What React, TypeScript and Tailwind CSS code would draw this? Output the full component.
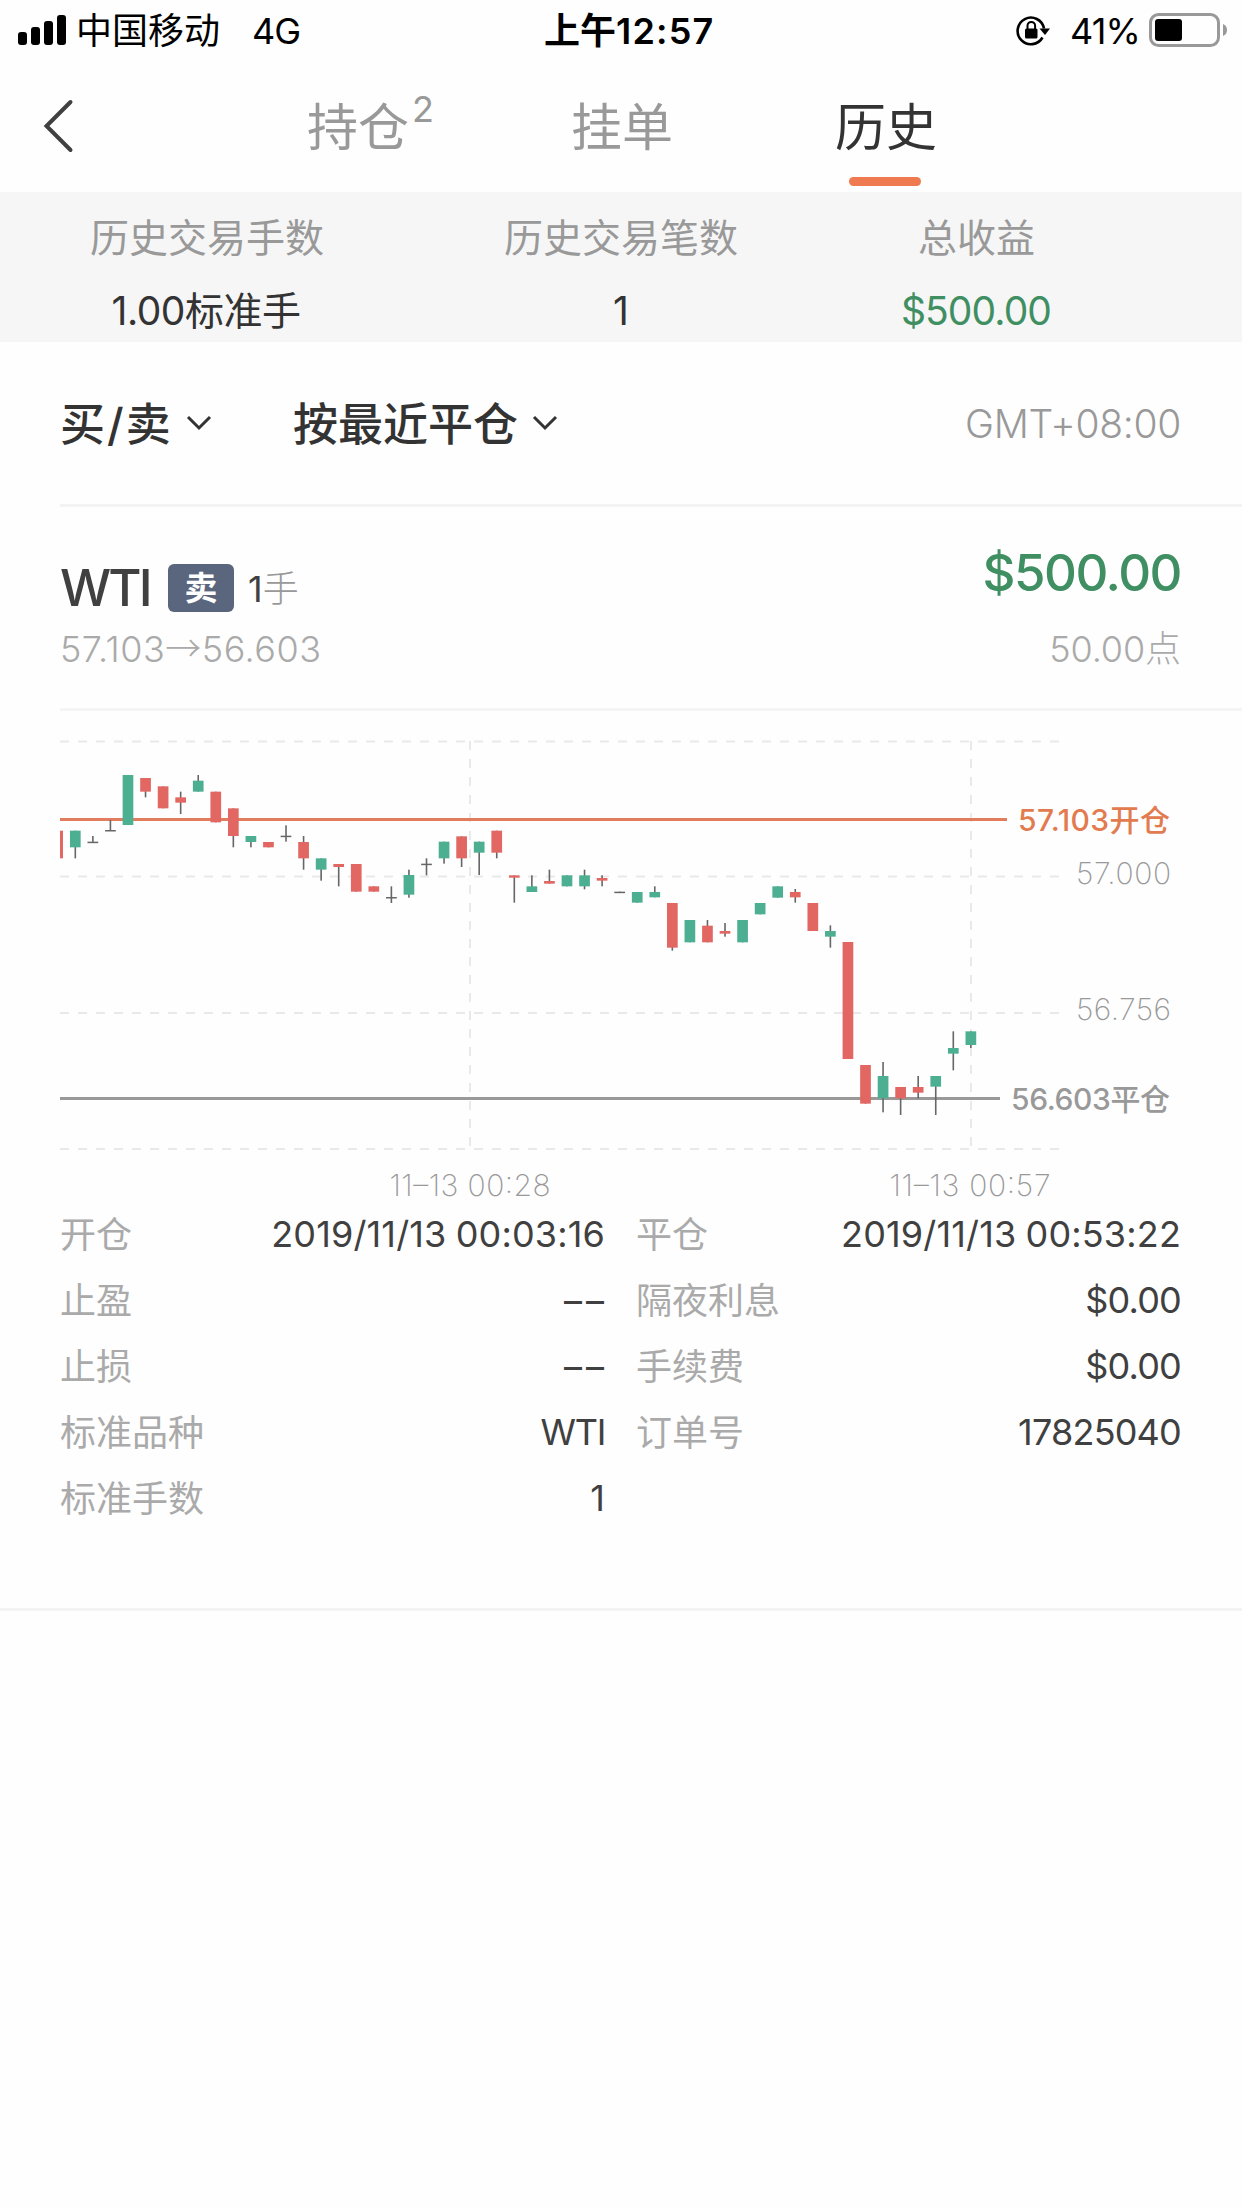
import React, { useState } from "react";
import clsx from "clsx";

// [direction, body top, body bottom, high, low], thirds of a pixel from the top of the plot
type RawCandle = ["g" | "r" | "d", number, number, number?, number?];

const RAW: RawCandle[] = [
  ["g", 332, 382, 332, 415],
  ["d", 365, 368, 348, 368],
  ["d", 330, 333, 300, 333],
  ["g", 165, 315],
  ["r", 174, 215, 174, 232],
  ["r", 199, 265],
  ["r", 232, 248, 215, 282],
  ["g", 182, 215, 165, 215],
  ["r", 215, 307],
  ["r", 265, 348, 265, 382],
  ["g", 348, 366, 348, 382],
  ["r", 366, 382],
  ["d", 347, 350, 316, 365],
  ["r", 366, 415, 348, 449],
  ["g", 415, 449, 415, 482],
  ["r", 432, 441, 432, 499],
  ["r", 432, 515],
  ["r", 499, 515],
  ["d", 531, 534, 499, 549],
  ["g", 465, 524, 449, 533],
  ["d", 431, 434, 415, 466],
  ["g", 365, 415, 365, 431],
  ["r", 349, 415, 349, 441],
  ["g", 365, 398, 365, 465],
  ["r", 332, 398, 332, 415],
  ["r", 466, 473, 466, 548],
  ["g", 499, 516, 466, 516],
  ["r", 483, 491, 449, 491],
  ["g", 466, 499],
  ["g", 466, 499, 449, 508],
  ["r", 474, 482, 466, 499],
  ["d", 515, 518],
  ["g", 516, 548],
  ["g", 516, 532, 499, 532],
  ["r", 549, 683, 549, 692],
  ["g", 600, 667],
  ["r", 617, 667, 600, 667],
  ["r", 633, 641, 609, 650],
  ["g", 600, 667],
  ["g", 549, 583],
  ["g", 499, 533],
  ["r", 516, 532, 507, 548],
  ["r", 549, 633],
  ["g", 633, 650, 616, 683],
  ["r", 666, 1017],
  ["r", 1035, 1151],
  ["g", 1068, 1135, 1026, 1177],
  ["r", 1101, 1135, 1101, 1185],
  ["r", 1101, 1118, 1068, 1135],
  ["g", 1068, 1100, 1068, 1185],
  ["g", 984, 1001, 934, 1051],
  ["g", 934, 975, 934, 984],
];

const COLORS = { g: "#4caf91", r: "#e26763", d: "#666666" };

const StatusBar = () => {
  return (
    <div className="flex h-[60px] items-center text-[36px] leading-[62px] text-black">
      <svg width="76" height="60" className="shrink-0">
        <rect x="18" y="32" width="9" height="13" rx="3" />
        <rect x="31" y="27" width="9" height="18" rx="3" />
        <rect x="44" y="21" width="9" height="24" rx="3" />
        <rect x="57" y="15" width="9" height="30" rx="3" />
      </svg>
      <span className="w-[176px] pt-0.5">中国移动</span>
      <span className="w-[292px] pt-0.5 tracking-[-1px]">4G</span>
      <span className="w-[471px] pt-0.5 font-semibold">
        上午<span className="tracking-[1.2px]">12:57</span>
      </span>
      <svg width="36" height="60" viewBox="0 0 36 60" className="shrink-0">
        <path
          d="M29 28.500A13.300 13.300 0 1 0 27.500 37.500"
          fill="none"
          stroke="#000"
          strokeWidth="2.600"
        />
        <path d="M24.500 28.500h10.500l-5 6.500z" />
        <rect x="10" y="28.500" width="12.500" height="10" rx="1.500" />
        <path
          d="M12.500 29v-3.300a3.800 3.800 0 0 1 7.600 0V29"
          fill="none"
          stroke="#000"
          strokeWidth="2"
        />
      </svg>
      <span className="ml-[19px] w-[78px] pt-0.5 tracking-[-0.8px] whitespace-nowrap">
        41%
      </span>
      <svg width="82" height="60" className="shrink-0">
        <rect
          x="2.500"
          y="14.500"
          width="68"
          height="31"
          rx="8"
          fill="none"
          stroke="#999"
          strokeWidth="3"
        />
        <rect x="7" y="19" width="27" height="22" rx="3" />
        <path d="M75 24v12q4-1.500 4-6t-4-6z" fill="#999" />
      </svg>
    </div>
  );
};

type TabsProps = {
  current: string;
  setCurrent: React.Dispatch<React.SetStateAction<string>>;
};

const Tabs = ({ current, setCurrent }: TabsProps) => {
  const tabs = [{ name: "持仓", count: 2 }, { name: "挂单" }, { name: "历史" }];

  return (
    <div className="flex h-[132px]">
      <svg width="226" height="132" fill="none" className="shrink-0">
        <path
          d="M70.500 42L46.500 66l24 24"
          stroke="#404040"
          strokeWidth="4"
          strokeLinecap="round"
        />
      </svg>
      {tabs.map((tab) => {
        const active = tab.name === current;
        return (
          <button
            key={tab.name}
            onClick={() => setCurrent(tab.name)}
            className={clsx(
              "flex w-[264px] flex-col items-center text-[51px]",
              active ? "text-[#333]" : "text-[#999]"
            )}
          >
            <span className="relative h-[117px] leading-[135px]">
              {tab.name}
              {tab.count && (
                <span className="absolute top-[25px] left-[105px] text-[36px] leading-[48px]">
                  {tab.count}
                </span>
              )}
            </span>
            {active && (
              <span className="mr-0.5 h-[9px] w-[72px] rounded-full bg-[#ef7a50]" />
            )}
          </button>
        );
      })}
    </div>
  );
};

const Summary = () => {
  return (
    <div className="grid h-[150px] grid-cols-[414px_414px_297px] bg-[#f6f6f6] pt-[9px] text-center text-[39px] leading-[73px]">
      <div className="text-[#999]">历史交易手数</div>
      <div className="text-[#999]">历史交易笔数</div>
      <div className="text-[#999]">总收益</div>
      <div className="pr-0.5 tracking-[-0.5px] text-[#333]">1.00标准手</div>
      <div className="text-[#333]">1</div>
      <div className="pr-px tracking-[-0.9px] text-[#3f8f62]">$500.00</div>
    </div>
  );
};

const Chevron = () => (
  <svg
    width="26"
    height="16"
    fill="none"
    stroke="#333"
    strokeWidth="3"
    className="mb-0.5"
  >
    <path d="M2 2l11 11L24 2" />
  </svg>
);

const Filters = () => {
  return (
    <div className="ml-[60px] flex h-[165px] items-center border-b-3 border-[#f3f3f3] pt-0.5 pr-[61px] text-[45px] font-medium text-[#333]">
      <div className="flex w-[233px] items-center gap-[15px]">
        <span className="pt-0.5">
          买<span className="px-0.5">/</span>卖
        </span>
        <Chevron />
      </div>
      <div className="flex items-center gap-3.5">
        <span className="pt-0.5">按最近平仓</span>
        <Chevron />
      </div>
      <div className="ml-auto text-[39px] font-light tracking-[-0.3px] text-[#999]">
        GMT+08:00
      </div>
    </div>
  );
};

const TradeHeader = () => {
  return (
    <div className="ml-[60px] flex h-[204px] justify-between border-b-3 border-[#f5f5f5] pr-[61px]">
      <div className="pt-[51px]">
        <div className="flex h-[60px] items-center">
          <span className="w-[108px] pt-px text-[51px] font-medium tracking-[-2.8px] text-[#404040]">
            WTI
          </span>
          <span className="flex h-12 w-[66px] items-center justify-center rounded-md bg-[#5a667d] pt-0.5 text-[33px] font-bold text-white">
            卖
          </span>
          <span className="ml-3.5 pt-0.5 text-[36px] text-[#404040]">
            1<span className="font-light text-[#999]">手</span>
          </span>
        </div>
        <div className="pt-px text-[36px] leading-[54px] font-light tracking-[0.5px] text-[#aaa]">
          57.103<span className="font-['Noto_Sans_CJK_SC']">→</span>56.603
        </div>
      </div>
      <div className="pt-9 text-right">
        <div className="h-[79px] text-[51px] leading-[60px] font-medium tracking-[-1.5px] text-[#3f8f62]">
          $500.00
        </div>
        <div className="text-[36px] leading-[54px] font-light tracking-[-0.1px] text-[#aaa]">
          50.00点
        </div>
      </div>
    </div>
  );
};

const CandleChart = () => {
  const left = 75.3;
  const step = 17.56;

  return (
    <svg
      width="1242"
      height="489"
      viewBox="0 711 1242 489"
      className="block overflow-visible"
      fontSize="30"
    >
      <g stroke="#e9e9e9" strokeWidth="2" strokeDasharray="9 9">
        {[741.5, 876.5, 1013, 1149].map((y) => (
          <path key={y} d={`M60 ${y}H1060`} />
        ))}
        <path d="M470 741V1149" />
        <path d="M971 741V1149" />
      </g>
      <path d="M60 819.500H1007" stroke="#e37c5c" strokeWidth="3" />
      <path d="M60 1098.500H1000" stroke="#999" strokeWidth="3" />
      <rect x="60" y="830.700" width="3" height="27.600" fill={COLORS.r} />
      {RAW.map(([kind, top, bottom, high = top, low = bottom], i) => {
        const x = left + i * step;
        return (
          <g key={i}>
            <rect
              x={x - 0.8}
              y={720 + high / 3}
              width="1.600"
              height={(low - high) / 3}
              fill="#666"
            />
            <rect
              x={x - 5.35}
              y={720 + top / 3}
              width="10.700"
              height={Math.max((bottom - top) / 3, 1.5)}
              fill={COLORS[kind]}
            />
          </g>
        );
      })}
      <g textAnchor="end" fontWeight="500">
        <text x="1170" y="831" fill="#e27b4f" textLength="152">
          57.103开仓
        </text>
        <text x="1170" y="1110" fill="#999" textLength="159">
          56.603平仓
        </text>
      </g>
      <g textAnchor="end" fill="#999" fontWeight="200">
        <text x="1171" y="884" textLength="95">
          57.000
        </text>
        <text x="1171" y="1020" textLength="95">
          56.756
        </text>
      </g>
      <g textAnchor="middle" fill="#999" fontWeight="200">
        <text x="470" y="1196" textLength="161">
          11–13 00:28
        </text>
        <text x="970" y="1196" textLength="161">
          11–13 00:57
        </text>
      </g>
    </svg>
  );
};

const Details = () => {
  const left = [
    ["开仓", "2019/11/13 00:03:16"],
    ["止盈", "––"],
    ["止损", "––"],
    ["标准品种", "WTI"],
    ["标准手数", "1"],
  ];
  const right = [
    ["平仓", "2019/11/13 00:53:22"],
    ["隔夜利息", "$0.00"],
    ["手续费", "$0.00"],
    ["订单号", "17825040"],
  ];

  return (
    <div className="flex h-[411px] gap-[31px] border-b-3 border-[#f3f3f3] pt-px pr-[61px] pl-[60px] text-[36px] leading-[66px]">
      {[left, right].map((rows, idx) => {
        return (
          <div key={idx} className={idx === 0 ? "w-[545px]" : "flex-1"}>
            {rows.map(([label, value]) => {
              return (
                <div key={label} className="flex h-[66px] justify-between">
                  <span className="pt-px text-[#aaa]">{label}</span>
                  <span
                    className={clsx(
                      "text-[#404040]",
                      value === "––" && "-mr-[3px] pt-px tracking-[4px]",
                      value === "WTI" && "tracking-[-1.3px]",
                      value.includes(":") &&
                        "tracking-[0.15px] [word-spacing:-1px]",
                      idx === 1 && !value.includes(":") && "tracking-[-0.8px]"
                    )}
                  >
                    {value}
                  </span>
                </div>
              );
            })}
          </div>
        );
      })}
    </div>
  );
};

export default function App() {
  const [current, setCurrent] = useState<string>("历史");

  return (
    <div className="h-[2208px] w-[1242px] overflow-hidden bg-[#fefefe] font-['Inter','Noto_Sans_CJK_SC',sans-serif]">
      <StatusBar />
      <Tabs current={current} setCurrent={setCurrent} />
      <Summary />
      <Filters />
      <TradeHeader />
      <CandleChart />
      <Details />
    </div>
  );
}
